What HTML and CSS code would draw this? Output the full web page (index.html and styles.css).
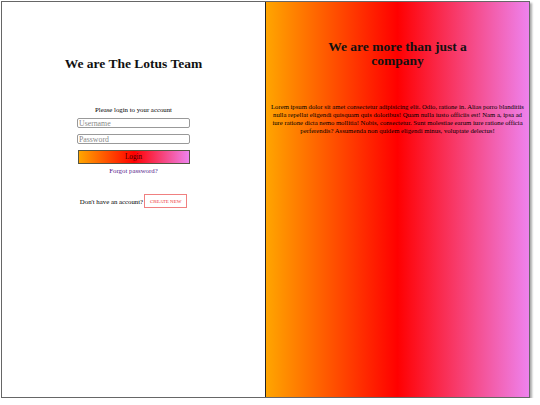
FILE: index.html
```html
<!DOCTYPE html>
<html>
<head>
<meta charset="utf-8">
<link rel="stylesheet" href="styles.css">
</head>
<body>
<div class="frame">
  <section class="left">
    <h1 class="title">We are The Lotus Team</h1>
    <form class="form">
      <p class="prompt">Please login to your account</p>
      <input class="field" type="text" placeholder="Username">
      <input class="field" type="password" placeholder="Password">
      <button class="login" type="button">Login</button>
      <a class="forgot" href="#">Forgot password?</a>
    </form>
    <div class="signup">
      <span class="ask">Don't have an account?</span>
      <button class="create" type="button">CREATE NEW</button>
    </div>
  </section>
  <section class="right">
    <h2 class="slogan">We are more than just a company</h2>
    <p class="lorem">Lorem ipsum dolor sit amet consectetur adipisicing elit. Odio, ratione in. Alias porro blanditiis nulla repellat eligendi quisquam quis doloribus! Quam nulla iusto officiis est! Nam a, ipsa ad iure ratione dicta nemo mollitia! Nobis, consectetur. Sunt molestiae earum iure ratione officia perferendis? Assumenda non quidem eligendi minus, voluptate delectus!</p>
  </section>
</div>
</body>
</html>
```
FILE: styles.css
```css
html, body {
  margin: 0;
  padding: 0;
  background: #fff;
}
body {
  font-family: "Liberation Serif", "Times New Roman", serif;
  color: #000;
}
.frame {
  margin: 1px 0 0 1px;
  width: 527px;
  height: 395px;
  border: 1px solid #666;
  box-shadow: 2px 2px 2px #aaa;
  display: flex;
}
.left {
  width: 263px;
  display: flex;
  flex-direction: column;
  align-items: center;
}
.title {
  margin: 54px 0 0;
  font-size: 13.5px;
  line-height: normal;
  font-weight: bold;
  color: #111;
}
.form {
  margin-top: 34px;
  width: 113px;
  display: flex;
  flex-direction: column;
  align-items: center;
}
.prompt {
  margin: 0;
  font-size: 6.8px;
  line-height: normal;
}
.field {
  box-sizing: border-box;
  width: 113px;
  height: 10px;
  margin: 5px 0 0;
  padding: 0 1px;
  border: 1px solid #999;
  border-radius: 2px;
  font-family: inherit;
  font-size: 7.8px;
  line-height: 8px;
}
.field + .field { margin-top: 6px; }
.field::placeholder { color: #888; }
.login {
  box-sizing: border-box;
  width: 112px;
  height: 14px;
  margin-top: 6px;
  padding: 0;
  border: 1px solid #554;
  background: linear-gradient(to right, orange, red, violet);
  font-family: inherit;
  font-size: 7.2px;
  color: #400;
}
.forgot {
  margin-top: 3px;
  font-size: 6.8px;
  line-height: normal;
  color: #551a8b;
  text-decoration: none;
}
.signup {
  margin-top: 20px;
  display: flex;
  align-items: center;
  gap: 1px;
  font-size: 6.8px;
}
.create {
  box-sizing: border-box;
  height: 14px;
  width: 43px;
  padding: 0;
  border: 1px solid #f08080;
  background: #fff;
  color: #e33;
  font-family: inherit;
  font-size: 5px;
}
.right {
  flex: 1;
  border-left: 1px solid #222;
  background: linear-gradient(to right, orange, red, violet);
  display: flex;
  flex-direction: column;
  align-items: center;
  text-align: center;
}
.slogan {
  margin: 38px 0 0;
  width: 150px;
  font-size: 13.5px;
  line-height: 14px;
  font-weight: bold;
  color: #111;
}
.lorem {
  margin: 35px 0 0;
  width: 258px;
  font-size: 6.7px;
  line-height: 7.9px;
}
```
